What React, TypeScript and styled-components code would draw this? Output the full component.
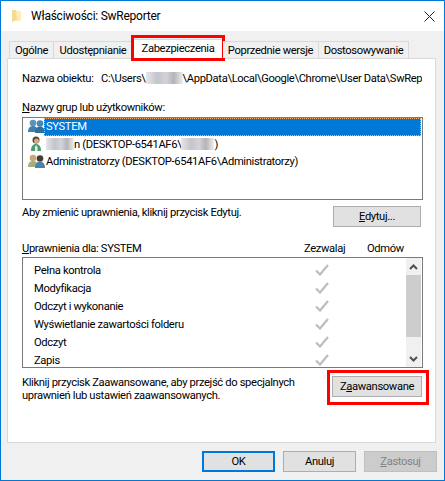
import React from 'react';
import styled, { createGlobalStyle } from 'styled-components';

const Global = createGlobalStyle`
  html, body { margin: 0; padding: 0; background: #fff; }
  body { font-family: Roboto, "Noto Sans", sans-serif; font-size: 11.2px; letter-spacing: -0.35px; color: #000; }
  u { text-underline-offset: 1px; text-decoration-thickness: 1px; }
`;

const Window = styled.div`
  width: 445px;
  height: 481px;
  box-sizing: border-box;
  border: 1px solid #0078d7;
  display: flex;
  flex-direction: column;
  overflow: hidden;
`;

const TitleBar = styled.div`
  height: 30px;
  flex: none;
  background: #fff;
  display: flex;
  align-items: center;
  padding: 0 9px 0 10px;
`;

const TitleText = styled.div`
  margin-left: 9px;
  font-size: 12px;
  letter-spacing: -0.25px;
  flex: 1;
`;

const Body = styled.div`
  flex: 1;
  background: #f0f0f0;
  padding: 10px 8px 8px 6px;
  display: flex;
  flex-direction: column;
`;

const TabRow = styled.div`
  display: flex;
  height: 17px;
  padding-left: 2px;
  flex: none;
  position: relative;
  z-index: 1;
`;

const Tab = styled.div<{ $w: number; $active?: boolean }>`
  width: ${(p) => p.$w}px;
  box-sizing: border-box;
  display: flex;
  align-items: center;
  justify-content: center;
  white-space: nowrap;
  position: relative;
  background: ${(p) => (p.$active ? '#fff' : '#f0f0f0')};
  border: 1px solid #d9d9d9;
  border-bottom: none;
  border-left-width: ${(p) => (p.$active ? 1 : 0)}px;
  height: ${(p) => (p.$active ? 20 : 17)}px;
  margin-top: ${(p) => (p.$active ? -2 : 0)}px;
  padding-bottom: ${(p) => (p.$active ? 3 : 0)}px;

  &:first-child {
    border-left-width: 1px;
  }

  ${(p) =>
    p.$active &&
    `&::after {
      content: '';
      position: absolute;
      left: -3px;
      right: -3px;
      top: -5px;
      bottom: -2px;
      border: 3px solid #f00;
    }`}
`;

const Panel = styled.div`
  height: 385px;
  flex: none;
  box-sizing: border-box;
  background: #fff;
  border: 1px solid #d9d9d9;
  padding: 12px 12px 0 14px;
  display: flex;
  flex-direction: column;
`;

const ObjectRow = styled.div`
  display: flex;
  height: 16px;
  line-height: 16px;
  white-space: nowrap;
  overflow: hidden;
  width: 400px;
`;

const ObjectLabel = styled.span`
  width: 79px;
  flex: none;
`;

const Blur = styled.span<{ $w: number }>`
  display: inline-block;
  width: ${(p) => p.$w}px;
  height: 12px;
  vertical-align: -2px;
  background: linear-gradient(90deg, #e6e6ea 0%, #c4c4cc 30%, #d2d2d8 55%, #b4b4b8 75%, #eeeeee 100%);
`;

const SectionLabel = styled.div`
  margin-top: 13px;
  height: 14px;
  line-height: 16px;
`;

const ListBox = styled.div<{ $h: number; $gap: number }>`
  margin-top: ${(p) => p.$gap}px;
  height: ${(p) => p.$h}px;
  box-sizing: border-box;
  border: 1px solid #7a7a7a;
  background: #fff;
  overflow: hidden;
  position: relative;
`;

const UserRow = styled.div`
  display: flex;
  align-items: flex-start;
  height: 17.5px;
  padding-left: 5px;
`;

const IconSlot = styled.div`
  width: 16px;
  flex: none;
`;

const UserName = styled.div<{ $selected?: boolean }>`
  flex: ${(p) => (p.$selected ? 1 : 'none')};
  padding-left: 2px;
  height: 18px;
  line-height: 18px;
  white-space: nowrap;
  margin-right: ${(p) => (p.$selected ? '1px' : 0)};
  color: ${(p) => (p.$selected ? '#fff' : '#000')};
  background: ${(p) => (p.$selected ? '#0078d7' : 'transparent')};
  outline: ${(p) => (p.$selected ? '1px dotted #f6b26b' : 'none')};
  outline-offset: -1px;
`;

const HintRow = styled.div`
  display: flex;
  justify-content: space-between;
  margin-top: 6px;
  padding-right: 2px;
`;

const Hint = styled.div`
  line-height: 13px;
`;

const Button = styled.button<{ $w: number; $primary?: boolean }>`
  width: ${(p) => p.$w}px;
  height: 21px;
  padding: 0;
  box-sizing: border-box;
  font: inherit;
  letter-spacing: inherit;
  color: #000;
  background: #e1e1e1;
  border: ${(p) => (p.$primary ? '2px solid #0078d7' : '1px solid #adadad')};
  position: relative;

  &:disabled {
    background: #cccccc;
    border-color: #bfbfbf;
    color: #838383;
  }
`;

const HighlightedButton = styled(Button)`
  &::after {
    content: '';
    position: absolute;
    left: -6px;
    right: -8px;
    top: -7px;
    bottom: -9px;
    border: 3px solid #f00;
  }
`;

const PermHeader = styled.div`
  display: grid;
  grid-template-columns: 282px 63px 1fr;
  margin-top: 14px;
  height: 14px;
  line-height: 16px;
`;

const PermBody = styled.div`
  display: flex;
  height: 100%;
`;

const PermList = styled.div`
  flex: 1;
  padding-top: 3px;
`;

const PermRow = styled.div`
  display: grid;
  grid-template-columns: 1fr 40px;
  height: 18px;
  align-items: center;
  padding-left: 11px;
  padding-right: 51px;
  white-space: nowrap;
`;

const Scrollbar = styled.div`
  width: 15px;
  flex: none;
  margin: 0 1px 0 0;
  background: #f0f0f0;
  display: flex;
  flex-direction: column;
`;

const ScrollArrow = styled.div`
  height: 17px;
  display: flex;
  align-items: center;
  justify-content: center;
`;

const ScrollTrack = styled.div`
  flex: 1;
`;

const ScrollThumb = styled.div`
  height: 62px;
  background: #cdcdcd;
`;

const FooterHintRow = styled(HintRow)`
  margin-top: 8px;
  padding-right: 1px;
`;

const ActionBar = styled.div`
  display: flex;
  justify-content: flex-end;
  gap: 8px;
  margin-top: 8px;
  margin-right: -1px;
`;

const FolderIcon = () => (
  <svg width="11" height="14" viewBox="0 0 11 14">
    <path d="M1 1h4l1 1v9l-5 2z" fill="#f3dc8e" />
    <path d="M5 2h5v10H2l4-1z" fill="#fbeeb8" />
  </svg>
);

const CloseIcon = () => (
  <svg width="11" height="11" viewBox="0 0 11 11">
    <path d="M.5.5l10 10M10.5.5l-10 10" stroke="#222" strokeWidth="1" fill="none" />
  </svg>
);

const GroupIcon = ({ left, right, hairL, hairR }: { left: string; right: string; hairL: string; hairR: string }) => (
  <svg width="17" height="16" viewBox="0 0 17 16">
    <circle cx="5" cy="5" r="3.3" fill={hairL} />
    <path d="M0 14c0-4 2-6 5-6s5 2 5 6z" fill={left} />
    <circle cx="12" cy="5.5" r="3.3" fill={hairR} />
    <path d="M7 15c0-4 2-6.500 5-6.500s5 2.500 5 6.500z" fill={right} />
  </svg>
);

const UserIcon = () => (
  <svg width="17" height="16" viewBox="0 0 17 16">
    <circle cx="8" cy="4" r="3.500" fill="#5b4330" />
    <circle cx="8.500" cy="5" r="2.500" fill="#d2a888" />
    <path d="M3 15c0-5 2-7 5-7s5 2 5 7z" fill="#4c9a72" />
    <path d="M8 9l1.500 2v4H7v-4z" fill="#e8f2ea" />
  </svg>
);

const CheckIcon = () => (
  <svg width="14" height="12" viewBox="0 0 14 12">
    <path d="M1 6.500l4 4 8-9.500" stroke="#bdbdbd" strokeWidth="2.200" fill="none" />
  </svg>
);

const Chevron = ({ up }: { up?: boolean }) => (
  <svg width="9" height="6" viewBox="0 0 9 6">
    <path d={up ? 'M1 5l3.500-3.500L8 5' : 'M1 1l3.500 3.500L8 1'} stroke="#505050" strokeWidth="2" fill="none" />
  </svg>
);

const tabs = [
  { label: 'Ogólne', w: 45 },
  { label: 'Udostępnianie', w: 79 },
  { label: 'Zabezpieczenia', w: 90, active: true },
  { label: 'Poprzednie wersje', w: 96 },
  { label: 'Dostosowywanie', w: 90 },
];

const permissions = [
  'Pełna kontrola',
  'Modyfikacja',
  'Odczyt i wykonanie',
  'Wyświetlanie zawartości folderu',
  'Odczyt',
  'Zapis',
];

export default function App() {
  return (
    <Window>
      <Global />
      <TitleBar>
        <FolderIcon />
        <TitleText>Właściwości: SwReporter</TitleText>
        <CloseIcon />
      </TitleBar>
      <Body>
        <TabRow>
          {tabs.map((t) => (
            <Tab key={t.label} $w={t.w} $active={t.active}>
              {t.label}
            </Tab>
          ))}
        </TabRow>
        <Panel>
          <ObjectRow>
            <ObjectLabel>Nazwa obiektu:</ObjectLabel>
            <span>
              C:\Users\<Blur $w={37} />\AppData\Local\Google\Chrome\User Data\SwReporter
            </span>
          </ObjectRow>
          <SectionLabel>
            <u>N</u>azwy grup lub użytkowników:
          </SectionLabel>
          <ListBox $h={83} $gap={3}>
            <UserRow>
              <IconSlot>
                <GroupIcon left="#3f80ad" right="#2f6f9f" hairL="#5a94bb" hairR="#4a87b2" />
              </IconSlot>
              <UserName $selected>SYSTEM</UserName>
            </UserRow>
            <UserRow>
              <IconSlot>
                <UserIcon />
              </IconSlot>
              <UserName>
                <Blur $w={28} />n (DESKTOP-6541AF6\<Blur $w={33} />)
              </UserName>
            </UserRow>
            <UserRow>
              <IconSlot>
                <GroupIcon left="#9fb080" right="#4a82ad" hairL="#c9a878" hairR="#4a3a30" />
              </IconSlot>
              <UserName>Administratorzy (DESKTOP-6541AF6\Administratorzy)</UserName>
            </UserRow>
          </ListBox>
          <HintRow>
            <Hint>Aby zmienić uprawnienia, kliknij przycisk Edytuj.</Hint>
            <Button $w={88}>
              <u>E</u>dytuj...
            </Button>
          </HintRow>
          <PermHeader>
            <span>
              <u>U</u>prawnienia dla: SYSTEM
            </span>
            <span>Zezwalaj</span>
            <span>Odmów</span>
          </PermHeader>
          <ListBox $h={111} $gap={2}>
            <PermBody>
              <PermList>
                {permissions.map((p) => (
                  <PermRow key={p}>
                    <span>{p}</span>
                    <CheckIcon />
                  </PermRow>
                ))}
              </PermList>
              <Scrollbar>
                <ScrollArrow>
                  <Chevron up />
                </ScrollArrow>
                <ScrollThumb />
                <ScrollTrack />
                <ScrollArrow>
                  <Chevron />
                </ScrollArrow>
              </Scrollbar>
            </PermBody>
          </ListBox>
          <FooterHintRow>
            <Hint>
              Kliknij przycisk Zaawansowane, aby przejść do specjalnych
              <br />
              uprawnień lub ustawień zaawansowanych.
            </Hint>
            <HighlightedButton $w={90}>
              Z<u>a</u>awansowane
            </HighlightedButton>
          </FooterHintRow>
        </Panel>
        <ActionBar>
          <Button $w={73} $primary>
            OK
          </Button>
          <Button $w={73}>Anuluj</Button>
          <Button $w={73} disabled>
            <u>Z</u>astosuj
          </Button>
        </ActionBar>
      </Body>
    </Window>
  );
}
